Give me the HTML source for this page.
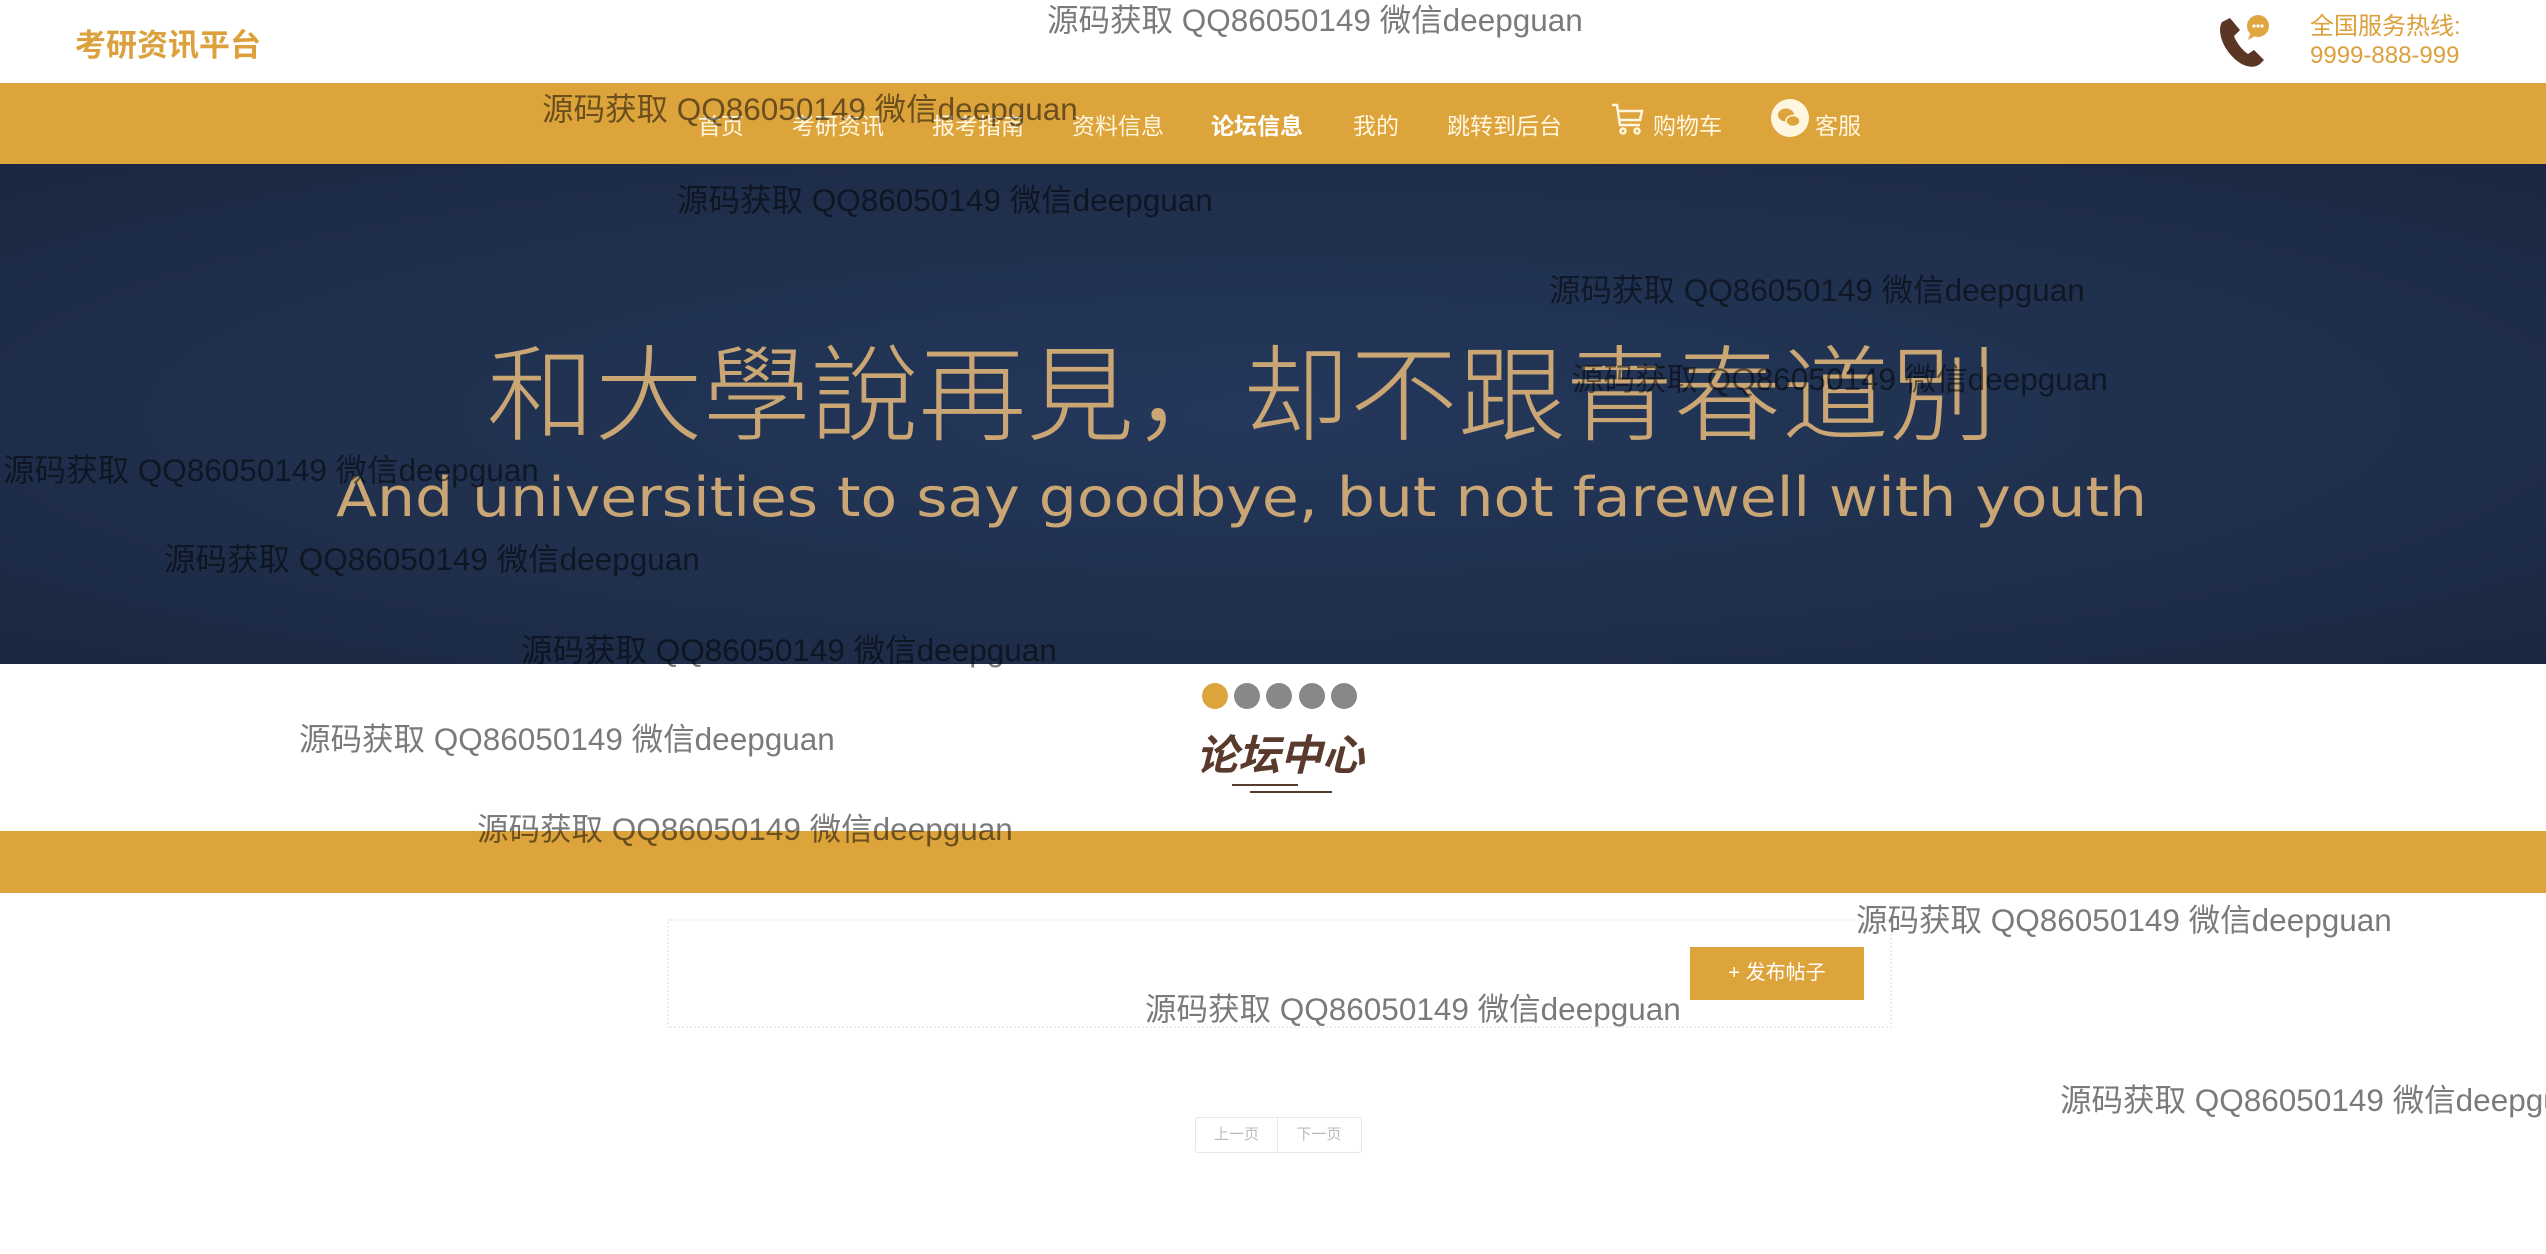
<!DOCTYPE html>
<html><head><meta charset="utf-8"><style>
*{margin:0;padding:0;box-sizing:border-box}
body{width:2546px;height:1254px;background:#fff;position:relative;overflow:hidden;font-family:"Liberation Sans","Noto Sans CJK SC",sans-serif}
.a{position:absolute}
.logo{left:75px;top:20px;font-size:31px;font-weight:bold;color:#dca03c}
.nav{left:0;top:83px;width:2546px;height:81px;background:#dea43c}
.nav span{position:absolute;top:24px;font-size:23px;color:#fff6e0}
.banner{left:0;top:164px;width:2546px;height:500px;background:radial-gradient(ellipse at 50% 50%,#24385c 0%,#1f2f4c 60%,#1a2740 100%)}
.dot{position:absolute;top:683px;width:26px;height:26px;border-radius:50%;background:#888}
.wm{position:absolute;font-size:31.5px;color:rgba(0,0,0,.52);white-space:nowrap;line-height:1}
</style></head><body>
<div class="a logo">考研资讯平台</div>
<svg class="a" style="left:2216px;top:12px" width="58" height="58" viewBox="0 0 58 58">
<path d="M6 10 C2 16 4 30 14 42 C24 54 36 58 44 52 L48 48 L38 38 L32 42 C26 38 20 30 18 24 L24 18 L14 6 Z" fill="#5b3526"/>
<circle cx="42" cy="14" r="11" fill="#e0a640"/><path d="M34 22 L32 28 L39 24Z" fill="#e0a640"/>
<circle cx="38" cy="14" r="1.6" fill="#fff"/><circle cx="42" cy="14" r="1.6" fill="#fff"/><circle cx="46" cy="14" r="1.6" fill="#fff"/>
</svg>
<div class="a" style="left:2310px;top:12px;font-size:24px;color:#dca03c;line-height:29px">全国服务热线:<br>9999-888-999</div>
<div class="a nav">
<span style="left:698px">首页</span>
<span style="left:792px">考研资讯</span>
<span style="left:932px">报考指南</span>
<span style="left:1072px">资料信息</span>
<span style="left:1211px;color:#fff;font-weight:bold">论坛信息</span>
<span style="left:1353px">我的</span>
<span style="left:1447px">跳转到后台</span>
<svg style="position:absolute;left:1610px;top:18px" width="36" height="36" viewBox="0 0 36 36" fill="none" stroke="#fff6e0" stroke-width="2.5"><path d="M2 4 L7 4 L10 24 L30 24 M9 10 L32 10 L30 19 L10 19"/><circle cx="13" cy="30" r="2.5"/><circle cx="27" cy="30" r="2.5"/></svg>
<span style="left:1653px">购物车</span>
<svg style="position:absolute;left:1771px;top:16px" width="38" height="38" viewBox="0 0 38 38"><circle cx="19" cy="19" r="19" fill="#fff6e0"/><ellipse cx="15" cy="16" rx="8" ry="6.5" fill="#dea43c"/><ellipse cx="22" cy="22" rx="7" ry="5.5" fill="#dea43c" stroke="#fff6e0" stroke-width="1.5"/></svg>
<span style="left:1815px">客服</span>
</div>
<div class="a banner"></div>
<svg class="a" style="left:0;top:164px" width="2546" height="500">
<text x="487" y="268" textLength="1510" lengthAdjust="spacingAndGlyphs" font-size="104" font-family="Noto Sans CJK SC" font-weight="300" fill="#c9a674">和大學說再見，却不跟青春道別</text>
<text x="336" y="352" textLength="1811" lengthAdjust="spacingAndGlyphs" font-size="54" font-family="DejaVu Sans" fill="#c9a674">And universities to say goodbye, but not farewell with youth</text>
</svg>
<div class="dot" style="left:1202px;background:#dea43c"></div>
<div class="dot" style="left:1234px"></div>
<div class="dot" style="left:1266px"></div>
<div class="dot" style="left:1299px"></div>
<div class="dot" style="left:1331px"></div>
<div class="a" style="left:1196px;top:722px;font-size:42px;font-weight:bold;font-style:italic;color:#5b3a2e">论坛中心</div>
<div class="a" style="left:1232px;top:784px;width:66px;height:2px;background:#5b3a2e"></div>
<div class="a" style="left:1250px;top:791px;width:82px;height:2px;background:#5b3a2e"></div>
<div class="a" style="left:0;top:831px;width:2546px;height:62px;background:#dea43c"></div>
<div class="a" style="left:667px;top:919px;width:1225px;height:109px;border:2px dotted #eee"></div>
<div class="a" style="left:1690px;top:947px;width:174px;height:53px;background:#dea43c;color:#fff;font-size:20px;line-height:53px;text-align:center">+ 发布帖子</div>
<div class="a" style="left:1195px;top:1117px;width:167px;height:36px;border:1px solid #e6e6e6;border-radius:3px;font-size:15px;color:#bbb;line-height:34px">
<span style="display:inline-block;width:82px;text-align:center;border-right:1px solid #e6e6e6">上一页</span><span style="display:inline-block;width:82px;text-align:center">下一页</span></div>
<div class="wm" style="left:1047px;top:5px">源码获取 QQ86050149 微信deepguan</div>
<div class="wm" style="left:542px;top:94px">源码获取 QQ86050149 微信deepguan</div>
<div class="wm" style="left:677px;top:185px">源码获取 QQ86050149 微信deepguan</div>
<div class="wm" style="left:1549px;top:275px">源码获取 QQ86050149 微信deepguan</div>
<div class="wm" style="left:1572px;top:364px">源码获取 QQ86050149 微信deepguan</div>
<div class="wm" style="left:3px;top:455px">源码获取 QQ86050149 微信deepguan</div>
<div class="wm" style="left:164px;top:544px">源码获取 QQ86050149 微信deepguan</div>
<div class="wm" style="left:521px;top:635px">源码获取 QQ86050149 微信deepguan</div>
<div class="wm" style="left:299px;top:724px">源码获取 QQ86050149 微信deepguan</div>
<div class="wm" style="left:477px;top:814px">源码获取 QQ86050149 微信deepguan</div>
<div class="wm" style="left:1856px;top:905px">源码获取 QQ86050149 微信deepguan</div>
<div class="wm" style="left:1145px;top:994px">源码获取 QQ86050149 微信deepguan</div>
<div class="wm" style="left:2060px;top:1085px">源码获取 QQ86050149 微信deepguan</div>
</body></html>
